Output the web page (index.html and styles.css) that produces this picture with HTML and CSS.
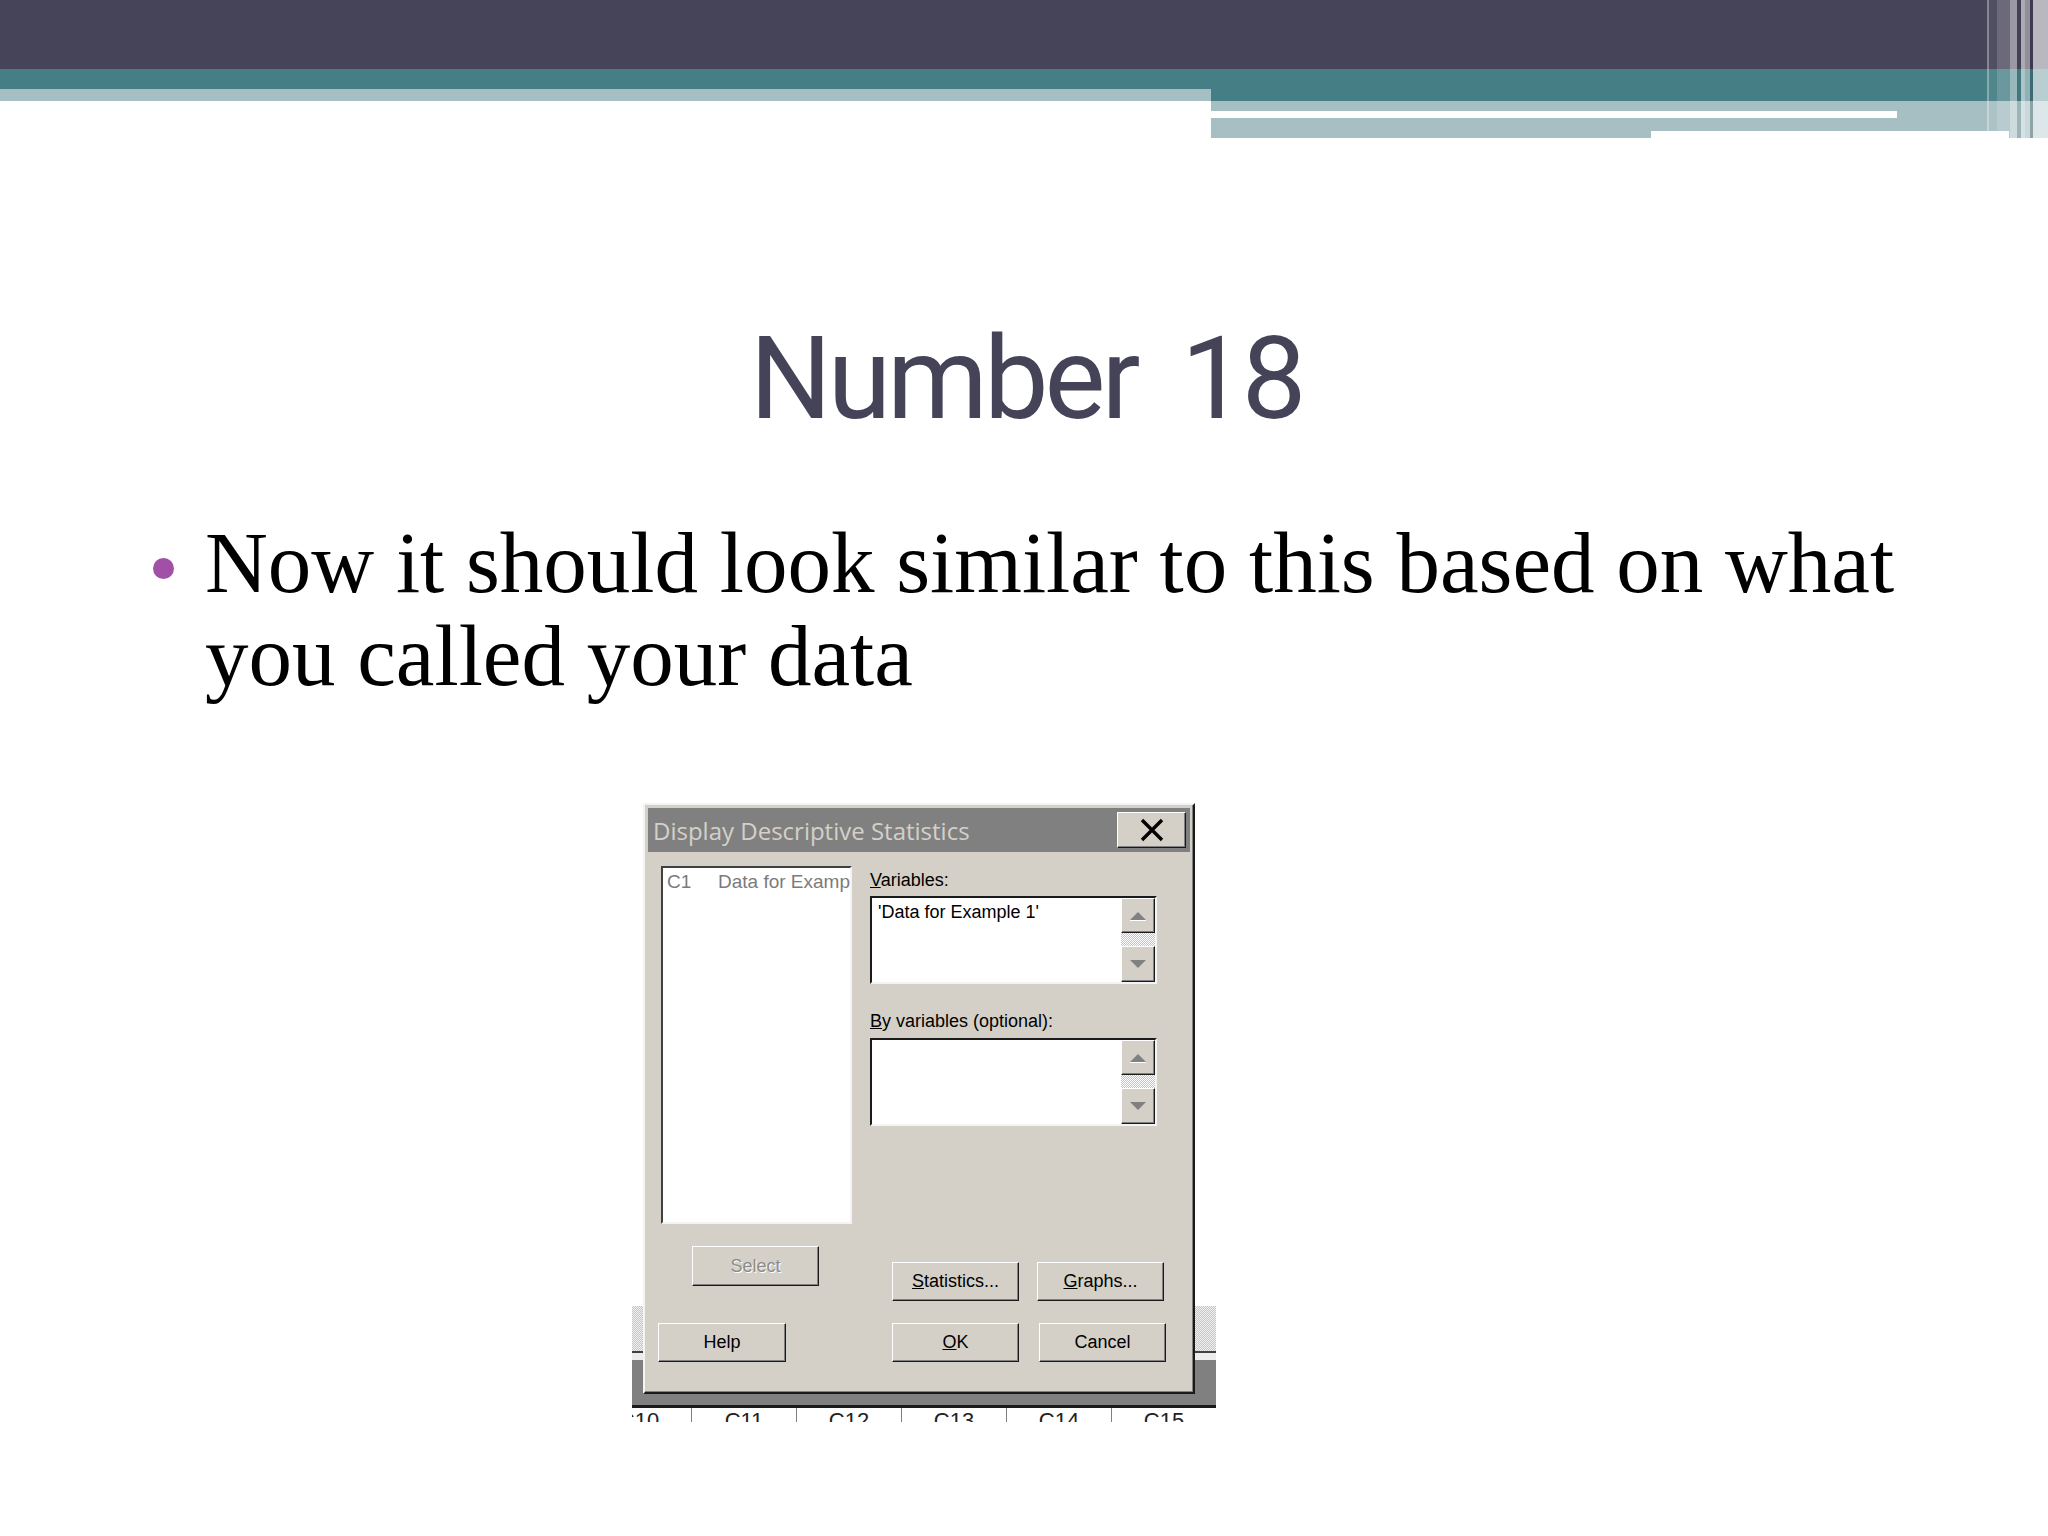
FILE: index.html
```html
<!DOCTYPE html>
<html lang="en">
<head>
<meta charset="utf-8">
<title>Number 18</title>
<link rel="stylesheet" href="styles.css">
</head>
<body>
<div class="topbar">
  <div class="dark"></div>
  <div class="band">
    <div class="band-left">
      <div class="teal-l"></div>
      <div class="light-l"></div>
    </div>
    <div class="band-right">
      <div class="teal-r"></div>
      <div class="light-r"><div class="white-strip"></div></div>
      <div class="light-r2"><div class="lr2-a"></div><div class="lr2-b"></div></div>
    </div>
  </div>
  <div class="stripes"></div>
</div>

<h1 class="title">Number 18</h1>

<div class="bullets">
  <span class="bullet"></span>
  <p class="btext">Now it should look similar to this based on what you called your data</p>
</div>

<div class="shot">
  <div class="bg-window">
    <div class="dots"></div>
    <div class="bg-line1"></div>
    <div class="bg-line2"></div>
    <div class="bg-gray"></div>
    <div class="bg-black"></div>
    <div class="hdr-row">
      <div class="hcell first">C10</div>
      <div class="hcell">C11</div>
      <div class="hcell">C12</div>
      <div class="hcell">C13</div>
      <div class="hcell">C14</div>
      <div class="hcell">C15</div>
    </div>
  </div>

  <div class="dialog">
    <div class="titlebar">
      <span class="title-text">Display Descriptive Statistics</span>
      <div class="close">
        <svg width="24" height="24" viewBox="0 0 24 24"><path d="M2 2 L22 22 M22 2 L2 22" stroke="#000" stroke-width="3.4" fill="none"/></svg>
      </div>
    </div>
    <div class="dlg-body">
      <div class="top-row">
        <div class="listbox">
          <div class="list-item"><span class="col-id">C1</span><span class="col-name">Data for Example 1</span></div>
        </div>
        <div class="right-col">
          <div class="label"><u>V</u>ariables:</div>
          <div class="field">
            <div class="field-text">'Data for Example 1'</div>
            <div class="scroll">
              <div class="sbtn up"><svg width="18" height="10" viewBox="0 0 18 10"><polygon points="1,9 17,9 9,1" fill="#808080"/><line x1="1" y1="9.5" x2="17" y2="9.5" stroke="#fff" stroke-width="1"/></svg></div>
              <div class="track"></div>
              <div class="sbtn down"><svg width="18" height="10" viewBox="0 0 18 10"><polygon points="1,1 17,1 9,9" fill="#808080"/></svg></div>
            </div>
          </div>
          <div class="label label2"><u>B</u>y variables (optional):</div>
          <div class="field field2">
            <div class="field-text"></div>
            <div class="scroll">
              <div class="sbtn up"><svg width="18" height="10" viewBox="0 0 18 10"><polygon points="1,9 17,9 9,1" fill="#808080"/><line x1="1" y1="9.5" x2="17" y2="9.5" stroke="#fff" stroke-width="1"/></svg></div>
              <div class="track"></div>
              <div class="sbtn down"><svg width="18" height="10" viewBox="0 0 18 10"><polygon points="1,1 17,1 9,9" fill="#808080"/></svg></div>
            </div>
          </div>
        </div>
      </div>
      <div class="row1">
        <div class="btn select">Select</div>
        <div class="btn stats"><span><u>S</u>tatistics...</span></div>
        <div class="btn graphs"><span><u>G</u>raphs...</span></div>
      </div>
      <div class="row2">
        <div class="btn help">Help</div>
        <div class="btn ok"><span><u>O</u>K</span></div>
        <div class="btn cancel">Cancel</div>
      </div>
    </div>
  </div>
</div>
</body>
</html>
```
FILE: styles.css
```css
html, body {
  margin: 0;
  padding: 0;
}
body {
  width: 2048px;
  min-height: 1536px;
  background: #ffffff;
  overflow: hidden;
  font-family: "Liberation Serif", serif;
}

/* ---------- top decoration ---------- */
.topbar {
  position: relative;
  height: 138px;
}
.dark {
  height: 69px;
  background: #464459;
}
.band {
  display: grid;
  grid-template-columns: 1211px 1fr;
}
.teal-l {
  height: 20px;
  background: #457e85;
}
.light-l {
  height: 12px;
  background: #a6bfc3;
}
.teal-r {
  height: 32px;
  background: #457e85;
}
.light-r {
  height: 30px;
  padding-top: 10px;
  box-sizing: border-box;
  background: #a6bfc3;
}
.white-strip {
  width: 686px;
  height: 7px;
  background: #ffffff;
}
.light-r2 {
  height: 7px;
  display: flex;
  justify-content: space-between;
}
.lr2-a {
  width: 440px;
  background: #a6bfc3;
}
.lr2-b {
  width: 39px;
  background: #a6bfc3;
}
.stripes {
  position: absolute;
  top: 0;
  right: 0;
  width: 61px;
  height: 138px;
  background: linear-gradient(to right,
    rgba(255,255,255,0.35) 0 2px,
    rgba(255,255,255,0.06) 2px 10px,
    rgba(255,255,255,0.2) 10px 23px,
    rgba(255,255,255,0.45) 23px 30px,
    rgba(0,0,0,0.06) 30px 34px,
    rgba(255,255,255,0.55) 34px 38px,
    rgba(255,255,255,0.4) 38px 43px,
    rgba(0,0,0,0.15) 43px 46px,
    rgba(255,255,255,0.62) 46px 61px);
}

/* ---------- title ---------- */
.title {
  margin: 183px 0 0 0;
  padding-left: 4px;
  text-align: center;
  font-family: Roboto, "Liberation Sans", sans-serif;
  font-weight: 400;
  font-size: 115px;
  line-height: 115px;
  letter-spacing: -4px;
  word-spacing: 20px;
  color: #454358;
}

/* ---------- bullet text ---------- */
.bullets {
  display: flex;
  gap: 31px;
  margin-top: 80px;
  padding-left: 153px;
}
.bullet {
  flex: none;
  width: 21px;
  height: 21px;
  margin-top: 42px;
  border-radius: 50%;
  background: #a24fa8;
}
.btext {
  margin: 0;
  width: 1740px;
  font-family: "Liberation Serif", serif;
  font-size: 87px;
  line-height: 93px;
  color: #000000;
}

/* ---------- screenshot of dialog ---------- */
.shot {
  position: relative;
  width: 584px;
  height: 619px;
  margin-left: 632px;
  margin-top: 101px;
  font-family: "Liberation Sans", sans-serif;
}
.bg-window {
  position: absolute;
  left: 0;
  right: 0;
  bottom: 0;
  height: 116px;
  display: flex;
  flex-direction: column;
}
.dots {
  height: 45px;
  background: repeating-conic-gradient(#c4c4c4 0 25%, #f2f2f2 0 50%) 0 0 / 2px 2px;
}
.bg-line1 {
  height: 2px;
  background: #404040;
}
.bg-line2 {
  height: 7px;
  background: #ececec;
}
.bg-gray {
  height: 45px;
  background: #808080;
}
.bg-black {
  height: 3px;
  background: #1a1a1a;
}
.hdr-row {
  height: 14px;
  display: flex;
  overflow: hidden;
  background: #ffffff;
}
.hcell {
  flex: none;
  width: 105px;
  box-sizing: border-box;
  border-right: 1px solid #808080;
  text-align: center;
  font-size: 22px;
  line-height: 22px;
  padding-top: 2px;
  color: #222222;
}
.hcell.first {
  margin-left: -45px;
}

.dialog {
  position: relative;
  z-index: 1;
  margin-left: 11px;
  width: 552px;
  height: 591px;
  box-sizing: border-box;
  padding: 3px;
  background: #d4d0c8;
  border: 2px solid;
  border-color: #f4f4f4 #1a1a1a #1a1a1a #f4f4f4;
  box-shadow: inset -1px -1px 0 #808080;
}
.titlebar {
  height: 44px;
  display: flex;
  align-items: center;
  justify-content: space-between;
  padding-left: 5px;
  padding-right: 4px;
  background: #808080;
}
.title-text {
  font-family: "Open Sans", "Liberation Sans", sans-serif;
  font-size: 24px;
  color: #d4d0c8;
  white-space: nowrap;
}
.close {
  width: 69px;
  height: 36px;
  box-sizing: border-box;
  display: flex;
  align-items: center;
  justify-content: center;
  background: #d4d0c8;
  border: 1px solid;
  border-color: #ffffff #1a1a1a #1a1a1a #ffffff;
  box-shadow: inset -1px -1px 0 #808080;
}

.dlg-body {
  margin-top: 14px;
  padding-left: 13px;
}
.top-row {
  display: flex;
  gap: 18px;
  height: 358px;
}
.listbox {
  width: 191px;
  height: 358px;
  box-sizing: border-box;
  background: #ffffff;
  border: 2px solid;
  border-color: #404040 #f4f4f4 #f4f4f4 #404040;
  overflow: hidden;
}
.list-item {
  display: flex;
  white-space: nowrap;
  overflow: hidden;
  padding: 4px 0 0 4px;
  font-size: 19px;
  line-height: 20px;
  color: #7b7b7b;
}
.col-id {
  flex: none;
  width: 51px;
}
.col-name {
  flex: 1;
  min-width: 0;
  overflow: hidden;
  text-overflow: clip;
}
.right-col {
  width: 287px;
}
.label {
  margin-top: 4px;
  font-size: 18px;
  line-height: 20px;
  color: #000000;
  white-space: nowrap;
}
.label2 {
  margin-top: 27px;
}
.field {
  margin-top: 6px;
  height: 88px;
  box-sizing: border-box;
  display: flex;
  background: #ffffff;
  border: 2px solid;
  border-color: #1a1a1a #f4f4f4 #f4f4f4 #1a1a1a;
}
.field2 {
  margin-top: 7px;
}
.field-text {
  flex: 1;
  padding: 4px 6px;
  font-size: 18px;
  line-height: 20px;
  color: #000000;
  white-space: nowrap;
}
.scroll {
  flex: none;
  width: 34px;
  display: flex;
  flex-direction: column;
}
.sbtn {
  box-sizing: border-box;
  display: flex;
  align-items: center;
  justify-content: center;
  background: #d4d0c8;
  border: 1px solid;
  border-color: #ffffff #1a1a1a #1a1a1a #ffffff;
  box-shadow: inset -1px -1px 0 #808080;
}
.sbtn.up {
  height: 35px;
}
.sbtn.down {
  height: 36px;
}
.track {
  flex: 1;
  background: repeating-conic-gradient(#c8c4bc 0 25%, #ffffff 0 50%) 0 0 / 2px 2px;
}

.btn {
  flex: none;
  width: 127px;
  height: 39px;
  box-sizing: border-box;
  display: flex;
  align-items: center;
  justify-content: center;
  background: #d4d0c8;
  border: 1px solid;
  border-color: #ffffff #1a1a1a #1a1a1a #ffffff;
  box-shadow: inset -1px -1px 0 #808080;
  font-size: 18px;
  color: #000000;
}
.row1 {
  display: flex;
  align-items: flex-start;
  margin-top: 22px;
}
.select {
  height: 40px;
  margin-left: 31px;
  color: #8c8c8c;
  text-shadow: 1px 1px 0 #ffffff;
}
.stats {
  margin-left: 73px;
  margin-top: 16px;
}
.graphs {
  margin-left: 18px;
  margin-top: 16px;
}
.row2 {
  display: flex;
  margin-top: 22px;
  margin-left: -3px;
}
.help {
  width: 128px;
}
.ok {
  margin-left: 106px;
}
.cancel {
  margin-left: 20px;
}
```
